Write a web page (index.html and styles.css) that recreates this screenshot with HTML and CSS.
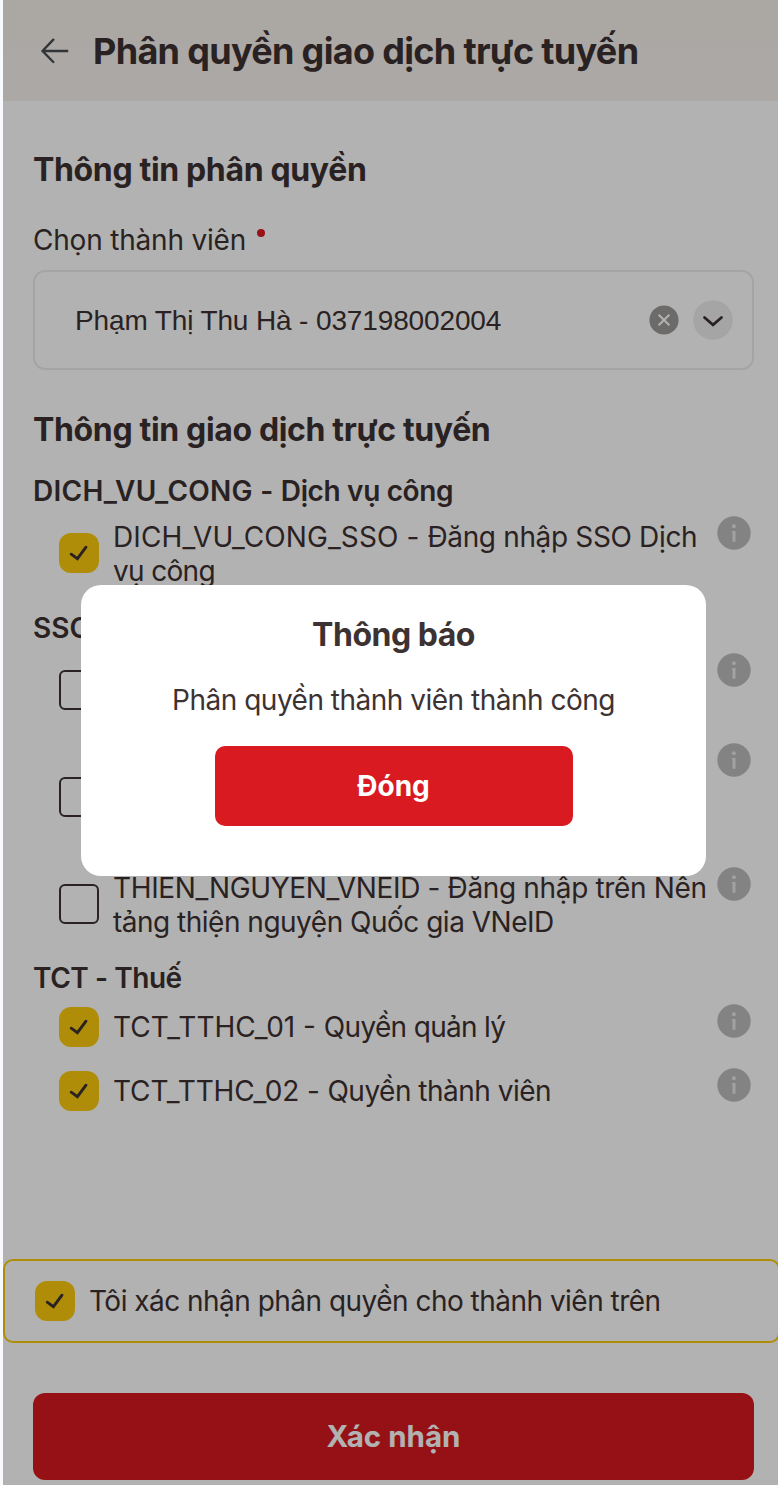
FILE: index.html
```html
<!DOCTYPE html>
<html lang="vi">
<head>
<meta charset="utf-8">
<title>Phân quyền giao dịch trực tuyến</title>
<link rel="stylesheet" href="styles.css">
</head>
<body>
<svg class="defs" width="0" height="0">
  <symbol id="check" viewBox="0 0 40 40"><path d="M12.2 21.2L18.4 25.7L27 14.2" fill="none" stroke="#3d3232" stroke-width="2.9" stroke-linecap="round"/></symbol>
  <symbol id="info" viewBox="0 0 34 34"><circle cx="17" cy="17" r="16.7" fill="#bcbcbc"/><circle cx="16.9" cy="10.2" r="1.9" fill="#e8e8e8"/><path d="M14.9 15.1H18.5V25.8H15.5V16.2H14.9Z" fill="#e8e8e8"/></symbol>
</svg>
<div class="app">
  <header class="header">
    <svg class="back" width="28" height="26" viewBox="0 0 28 26"><path d="M1.5 13H26.2M12.3 1.7L1.5 13L12.3 24" fill="none" stroke="#484d50" stroke-width="2.4" stroke-linecap="round" stroke-linejoin="round"/></svg>
    <h1 class="title"><span>Phân quyền giao dịch trực tuyến</span></h1>
  </header>
  <main class="content">
    <h2 class="section section-member"><span>Thông tin phân quyền</span></h2>
    <div class="label"><span>Chọn thành viên</span><i class="required"></i></div>
    <div class="select">
      <span class="value">Phạm Thị Thu Hà - 037198002004</span>
      <svg class="clear" width="30" height="30" viewBox="0 0 30 30"><circle cx="15" cy="15" r="14.6" fill="#9b9a98"/><path d="M10.2 10.2L19.8 19.8M19.8 10.2L10.2 19.8" stroke="#fff" stroke-width="2" stroke-linecap="round"/></svg>
      <svg class="chevron" width="40" height="40" viewBox="0 0 40 40"><circle cx="20" cy="20" r="19.8" fill="#ececec"/><path d="M11.5 17.5L20 24.8L28.5 17.5" fill="none" stroke="#3d3232" stroke-width="2.8" stroke-linecap="round"/></svg>
    </div>
    <h2 class="section section-services"><span>Thông tin giao dịch trực tuyến</span></h2>

    <section class="group">
      <h3 class="group-title"><span class="code-wide">DICH_VU_CONG - </span><span class="desc">Dịch vụ công</span></h3>
      <div class="row"><svg class="box checked"><use href="#check"/></svg><p class="text"><span class="code">DICH_VU_CONG_SSO - </span><span class="desc">Đăng nhập SSO Dịch</span><br><span class="desc-tight">vụ công</span></p><svg class="info"><use href="#info"/></svg></div>
    </section>
    <section class="group">
      <h3 class="group-title"><span>SSO</span></h3>
      <div class="row"><span class="box"></span><p class="text"></p><svg class="info"><use href="#info"/></svg></div>
      <div class="row row-tall"><span class="box"></span><p class="text"></p><svg class="info"><use href="#info"/></svg></div>
      <div class="row"><span class="box"></span><p class="text"><span class="desc">THIEN_NGUYEN_VNEID - Đăng nhập trên Nền</span><br><span class="desc-medium">tảng thiện nguyện Quốc gia VNeID</span></p><svg class="info"><use href="#info"/></svg></div>
    </section>
    <section class="group">
      <h3 class="group-title group-title-tax"><span>TCT - Thuế</span></h3>
      <div class="row row-short"><svg class="box checked"><use href="#check"/></svg><p class="text"><span>TCT_TTHC_01 - </span><span class="desc-tight">Quyền quản lý</span></p><svg class="info"><use href="#info"/></svg></div>
      <div class="row row-short"><svg class="box checked"><use href="#check"/></svg><p class="text"><span class="code-tight">TCT_TTHC_02 - </span><span class="desc-medium">Quyền thành viên</span></p><svg class="info"><use href="#info"/></svg></div>
    </section>
  </main>
  <footer class="footer">
    <div class="confirm"><svg class="box checked"><use href="#check"/></svg><span class="confirm-text">Tôi xác nhận phân quyền cho thành viên trên</span></div>
    <button class="submit"><span>Xác nhận</span></button>
  </footer>
  <div class="overlay"></div>
  <div class="modal">
    <h2 class="modal-title"><span>Thông báo</span></h2>
    <p class="modal-message"><span>Phân quyền thành viên thành công</span></p>
    <button class="close"><span>Đóng</span></button>
  </div>
</div>
</body>
</html>
```

FILE: styles.css
```css
* { box-sizing: border-box; margin: 0; padding: 0; }
body { width: 778px; height: 1485px; overflow: hidden; background: #f8fafe; font-family: Inter, "Noto Sans", sans-serif; color: #3d3232; }
.defs { display: block; height: 0; }
.app { position: relative; display: flex; flex-direction: column; width: 775px; height: 1485px; margin-left: 3px; overflow: hidden; background: #fff; }
span { white-space: pre; }
.header { display: flex; align-items: center; gap: 24px; height: 101px; padding-left: 38px; background: linear-gradient(#f5f0e8, #f5f1ed 60%, #f5f1ec); }
.title { font-size: 36px; font-weight: 700; line-height: 44px; letter-spacing: -.68px; }
.content { display: flex; flex-direction: column; height: 1158px; padding: 47px 24px 0 30px; }
.section { height: 44px; font-size: 32px; font-weight: 700; line-height: 44px; letter-spacing: -.35px; }
.label { display: flex; gap: 11px; height: 36px; margin-top: 30px; font-size: 28px; line-height: 36px; letter-spacing: -.2px; }
.required { width: 8px; height: 8px; margin-top: 7px; border-radius: 50%; background: #db1a20; }
.select { display: flex; align-items: center; height: 100px; margin-top: 12px; padding: 0 19px 0 40px; border: 2px solid #ebebeb; border-radius: 12px; font-family: "Liberation Sans", sans-serif; font-size: 28px; letter-spacing: -.13px; }
.value { flex: 1; padding-top: 2px; }
.chevron { margin-left: 14px; }
.section-services { margin-top: 38px; }
.group { padding-top: 19px; }
.section-services + .group { padding-top: 20px; }
.group-title { height: 38px; font-size: 28px; font-weight: 600; line-height: 38px; margin-bottom: 6px; }
.group-title-tax { letter-spacing: -.45px; line-height: 37px; }
.row { display: flex; align-items: center; height: 74px; padding-left: 26px; margin-bottom: 16px; }
.row:last-child { margin-bottom: 0; }
.row-tall { height: 108px; }
.row-short { height: 46px; margin-bottom: 17.5px; }
.row-short .text { margin-top: -1px; }
.box { flex: none; width: 40px; height: 40px; border: 2px solid #3d3232; border-radius: 6px; }
.checked { border: 0; border-radius: 12px; background: #fdca0d; }
.text { flex: 1; min-width: 0; margin-left: 14px; font-size: 28px; line-height: 34px; padding-top: 1px; }
.code-wide { letter-spacing: .26px; }
.code { letter-spacing: .1px; }
.code-tight { letter-spacing: -.15px; }
.desc { letter-spacing: -.35px; }
.desc-medium { letter-spacing: -.5px; }
.desc-tight { letter-spacing: -.68px; }
.info { flex: none; align-self: flex-start; width: 34px; height: 34px; margin-right: 3px; }
.footer { display: flex; flex-direction: column; }
.confirm { display: flex; align-items: center; gap: 14px; width: 777px; height: 84px; padding-left: 30px; border: 2px solid #fdca0d; border-radius: 10px; font-size: 28px; letter-spacing: -.52px; }
.submit { width: 721px; height: 87px; margin: 50px 0 0 30px; padding-bottom: 2px; border: 0; border-radius: 12px; background: #d6191f; color: #fff; font: 700 29.5px Inter, sans-serif; }
.overlay { position: absolute; inset: 0; background: rgba(0, 0, 0, .3); }
.modal { position: absolute; left: 78px; top: 585px; display: flex; flex-direction: column; align-items: center; width: 625px; height: 291px; padding-top: 28px; border-radius: 20px; background: #fff; }
.modal-title { font-size: 32px; font-weight: 700; line-height: 44px; letter-spacing: -.5px; }
.modal-message { margin-top: 24px; font-size: 28px; line-height: 38px; letter-spacing: -.5px; }
.close { width: 358px; height: 80px; margin-top: 27px; border: 0; border-radius: 10px; background: #d91a20; color: #fff; font: 700 28px Inter, sans-serif; }
```
